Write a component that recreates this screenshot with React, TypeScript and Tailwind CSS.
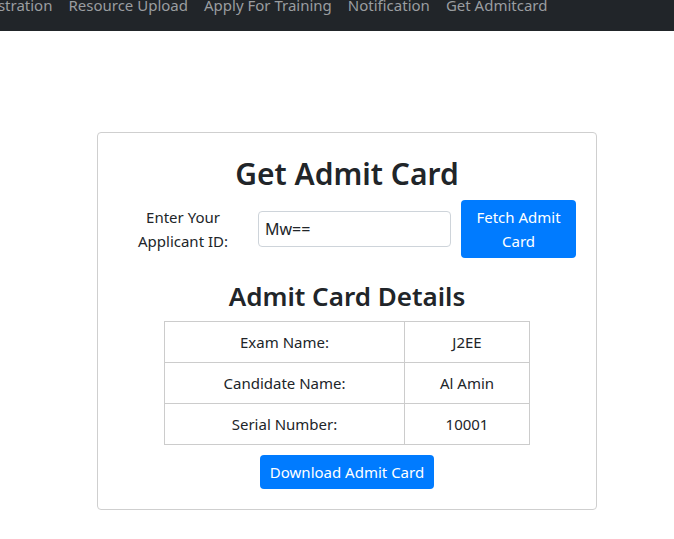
const links = ['Registration', 'Resource Upload', 'Apply For Training', 'Notification', 'Get Admitcard']

const rows = [
  { label: 'Exam Name:', value: 'J2EE' },
  { label: 'Candidate Name:', value: 'Al Amin' },
  { label: 'Serial Number:', value: '10001' },
]

export default function App() {
  return (
    <div className="min-h-[539px] bg-white text-[#212529]" style={{ fontFamily: '"Noto Sans", "Open Sans", sans-serif' }}>
      {/* Navbar (scrolled so only the bottom part shows) */}
      <nav className="h-[31px] bg-[#212529] overflow-hidden">
        <div className="flex -mt-[7px] -ml-[41px] text-[15px] leading-6 text-[#9a9da0]">
          {links.map((l) => (
            <span key={l} className="px-2 whitespace-nowrap">
              {l}
            </span>
          ))}
        </div>
      </nav>

      <div className="pt-[101px] pl-[20px] flex justify-center">
        <div className="w-[500px] border border-[#cfcfcf] rounded-[4px] px-4 pt-[21px] pb-[20px] flex flex-col items-center">
          <h2 className="text-[30px] font-semibold leading-[40px]">Get Admit Card</h2>

          <div className="flex items-center mt-[6px] gap-[10px]">
            <label className="w-[130px] text-center text-[15px] leading-6">
              Enter Your
              <br />
              Applicant ID:
            </label>
            <input
              className="w-[193px] h-[36px] border border-[#ced4da] rounded-[4px] px-[6px] text-[16px] outline-none"
              defaultValue="Mw=="
              style={{ fontFamily: 'inherit' }}
            />
            <button className="w-[115px] h-[58px] bg-[#007bff] text-white rounded-[4px] text-[15px] leading-6">
              Fetch Admit
              <br />
              Card
            </button>
          </div>

          <h3 className="text-[26px] font-semibold leading-[34px] mt-[21px]">Admit Card Details</h3>

          <table className="mt-[8px] border-collapse text-[15px]">
            <tbody>
              {rows.map((r) => (
                <tr key={r.label} className="h-[41px]">
                  <td className="w-[240px] border border-[#cccccc] text-center">{r.label}</td>
                  <td className="w-[125px] border border-[#cccccc] text-center">{r.value}</td>
                </tr>
              ))}
            </tbody>
          </table>

          <button className="mt-[10px] h-[34px] px-[10px] bg-[#007bff] text-white rounded-[4px] text-[15px]">
            Download Admit Card
          </button>
        </div>
      </div>
    </div>
  )
}
